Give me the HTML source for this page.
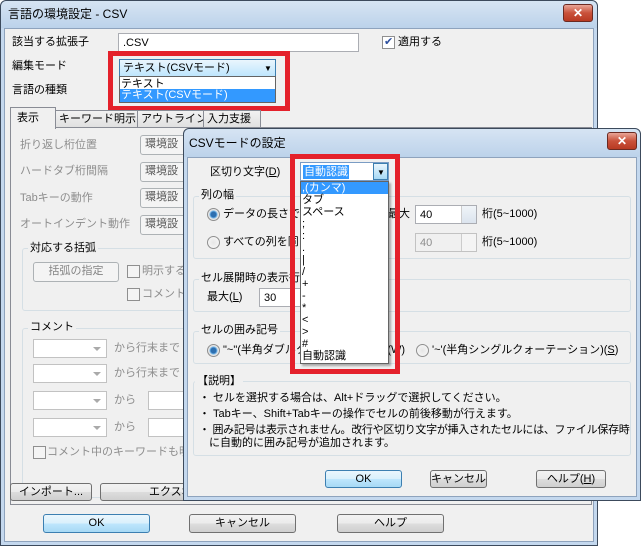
<!DOCTYPE html>
<html><head><meta charset="utf-8">
<style>
*{box-sizing:border-box;margin:0;padding:0}
body{width:642px;height:547px;background:#fff;position:relative;overflow:hidden;font-family:"Liberation Sans","Noto Sans CJK JP",sans-serif;font-size:11px;color:#000}
.a{position:absolute;white-space:nowrap;line-height:14px}
.win{position:absolute;border:1px solid #3c4a5c;border-radius:6px 6px 0 0;background:#c4d8ee;overflow:hidden}
.tb{position:absolute;left:0;right:0;top:0;height:27px;background:linear-gradient(#d6e4f3,#bcd2ea);border-radius:6px 6px 0 0}
.body{position:absolute;background:#f0f0f0;border:1px solid #8ea3bd}
.close{position:absolute;width:30px;height:18px;border:1px solid #6b2a22;border-radius:3px;background:linear-gradient(#e9a597,#c9513a 50%,#b83a22);color:#fff;font-weight:bold;text-align:center;line-height:16px;font-size:12px}
.in{position:absolute;background:#fff;border:1px solid #abadb3}
.btn{position:absolute;white-space:nowrap;overflow:hidden;border:1px solid #707070;border-radius:3px;background:linear-gradient(#f2f2f2,#ebebeb 50%,#dddddd 51%,#cfcfcf);text-align:center;line-height:16px}
.btn.def{border-color:#3c7fb1;background:linear-gradient(#eaf6fd,#d9f0fc 50%,#bee6fd 51%,#a7d9f5)}
.btn.dis{border-color:#adb2b5;background:#f4f4f4;color:#838383}
.g{color:#8d8d8d}
.grp{position:absolute;border:1px solid #d5dfe5;border-radius:3px}
.lbl{position:absolute;background:#f0f0f0;padding:0 2px;line-height:14px;white-space:nowrap}
.cb{position:absolute;width:13px;height:13px;border:1px solid #8f8f8f;background:#f4f4f4}
.rd{position:absolute;width:13px;height:13px;border:1px solid #8f8f8f;border-radius:50%;background:radial-gradient(circle,#e6e6e6,#fafafa)}
.rd.on{background:radial-gradient(circle,#2d6fb0 0 2.5px,#6fb3e8 3.5px,#e6e6e6 4.5px)}
.red{position:absolute;border:5px solid #e4212b}
.dd{position:absolute;background:#fff;border:1px solid #646464;box-shadow:2px 2px 2px rgba(0,0,0,.3)}
.cmb{position:absolute;border:1px solid #c2c2c2;background:#fff}
.cmb:after{content:"";position:absolute;right:5px;top:7px;border:4px solid transparent;border-top:4px solid #aaa}
.spin{position:absolute;width:15px;border-left:1px solid #ccc;right:0;top:0;bottom:0;background:linear-gradient(#f0f4f8,#dbe4ee)}
.tab{position:absolute;white-space:nowrap;overflow:hidden;height:18px;border:1px solid #898c95;background:linear-gradient(#f2f2f2,#e0e0e0);padding:1px 3px;line-height:14px}
</style></head><body>

<!-- main window -->
<div class="win" style="left:0;top:0;width:598px;height:546px">
 <div class="tb"></div>
 <div class="a" style="left:7px;top:6px;font-size:12px">言語の環境設定 - CSV</div>
 <div class="close" style="left:562px;top:3px">✕</div>
 <div class="body" style="left:3px;top:27px;width:590px;height:514px"></div>
</div>
<div class="a" style="left:12px;top:35px">該当する拡張子</div>
<div class="in" style="left:118px;top:33px;width:241px;height:19px"><span class="a" style="left:4px;top:2px">.CSV</span></div>
<div class="cb" style="left:382px;top:36px;background:#fff"><span class="a" style="left:1px;top:-2px;color:#2c4f9e;font-size:11px">✔</span></div>
<div class="a" style="left:398px;top:35px">適用する</div>
<div class="a" style="left:12px;top:59px">編集モード</div>
<div class="a" style="left:12px;top:83px">言語の種類</div>
<div class="in" style="left:119px;top:59px;width:157px;height:18px;border-color:#3c7fb1;background:linear-gradient(#eaf6fd,#bee6fd)"><span class="a" style="left:3px;top:1px">テキスト(CSVモード)</span><span class="a" style="left:144px;top:2px;font-size:8px">▼</span></div>
<div class="dd" style="left:119px;top:76px;width:157px;height:27px;box-shadow:none">
 <div class="a" style="left:1px;top:0">テキスト</div>
 <div class="a" style="left:0;top:12px;width:155px;height:13px;background:#3399ff;color:#fff;line-height:13px;padding-left:1px">テキスト(CSVモード)</div>
</div>
<div class="red" style="left:108px;top:51px;width:182px;height:60px"></div>
<div style="position:absolute;left:194px;top:110px;width:4px;height:12px;background:#e4212b"></div>
<div style="position:absolute;left:190px;top:120px;border:6px solid transparent;border-top:8px solid #e4212b"></div>

<!-- tabs -->
<div style="position:absolute;left:10px;top:127px;width:582px;height:378px;border:1px solid #898c95;background:#fff"></div>
<div style="position:absolute;left:11px;top:128px;width:580px;height:376px;background:#f0f0f0"></div>
<div class="tab" style="left:55px;top:110px;width:83px">キーワード明示</div>
<div class="tab" style="left:137px;top:110px;width:67px">アウトライン</div>
<div class="tab" style="left:203px;top:110px;width:58px">入力支援</div>
<div class="a" style="left:10px;top:107px;width:46px;height:22px;border:1px solid #898c95;border-bottom:none;background:#f0f0f0;padding:3px 6px">表示</div>

<div class="a g" style="left:20px;top:138px">折り返し桁位置</div>
<div class="a g" style="left:20px;top:164px">ハードタブ桁間隔</div>
<div class="a g" style="left:20px;top:191px">Tabキーの動作</div>
<div class="a g" style="left:20px;top:217px">オートインデント動作</div>
<div class="btn dis" style="left:140px;top:135px;width:50px;height:20px;text-align:left;padding-left:4px;color:#555">環境設</div>
<div class="btn dis" style="left:140px;top:162px;width:50px;height:20px;text-align:left;padding-left:4px;color:#555">環境設</div>
<div class="btn dis" style="left:140px;top:188px;width:50px;height:20px;text-align:left;padding-left:4px;color:#555">環境設</div>
<div class="btn dis" style="left:140px;top:215px;width:50px;height:20px;text-align:left;padding-left:4px;color:#555">環境設</div>

<div class="grp" style="left:22px;top:248px;width:170px;height:63px"></div>
<div class="lbl" style="left:28px;top:241px">対応する括弧</div>
<div class="btn dis" style="left:33px;top:262px;width:86px;height:20px">括弧の指定</div>
<div class="cb" style="left:127px;top:265px"></div><div class="a g" style="left:142px;top:264px">明示する</div>
<div class="cb" style="left:127px;top:288px"></div><div class="a g" style="left:142px;top:287px">コメント/</div>

<div class="grp" style="left:22px;top:328px;width:170px;height:170px"></div>
<div class="lbl" style="left:28px;top:320px">コメント</div>
<div class="cmb" style="left:33px;top:339px;width:74px;height:19px"></div><div class="a g" style="left:114px;top:341px">から行末まで</div>
<div class="cmb" style="left:33px;top:364px;width:74px;height:19px"></div><div class="a g" style="left:114px;top:366px">から行末まで</div>
<div class="cmb" style="left:33px;top:391px;width:74px;height:19px"></div><div class="a g" style="left:114px;top:393px">から</div>
<div class="in" style="left:148px;top:391px;width:40px;height:19px;border-color:#c2c2c2"></div>
<div class="cmb" style="left:33px;top:418px;width:74px;height:19px"></div><div class="a g" style="left:114px;top:420px">から</div>
<div class="in" style="left:148px;top:418px;width:40px;height:19px;border-color:#c2c2c2"></div>
<div class="cb" style="left:33px;top:446px"></div><div class="a g" style="left:47px;top:445px">コメント中のキーワードも明示</div>

<div class="btn" style="left:10px;top:483px;width:82px;height:18px">インポート...</div>
<div class="btn" style="left:100px;top:483px;width:90px;height:18px;text-align:left;padding-left:48px">エクスポ</div>
<div class="btn def" style="left:43px;top:514px;width:107px;height:19px">OK</div>
<div class="btn" style="left:189px;top:514px;width:107px;height:19px">キャンセル</div>
<div class="btn" style="left:337px;top:514px;width:107px;height:19px">ヘルプ</div>

<!-- sub dialog -->
<div class="win" style="left:183px;top:128px;width:458px;height:373px">
 <div class="tb" style="height:28px"></div>
 <div class="a" style="left:5px;top:7px;font-size:12px">CSVモードの設定</div>
 <div class="close" style="left:423px;top:3px">✕</div>
 <div class="body" style="left:3px;top:28px;width:450px;height:340px"></div>
</div>
<div class="a" style="left:210px;top:165px">区切り文字(<u>D</u>)</div>
<div class="in" style="left:300px;top:162px;width:89px;height:19px;border-color:#7a9cc4">
 <span class="a" style="left:2px;top:2px;background:#3399ff;color:#fff;padding:0 1px">自動認識</span>
 <div style="position:absolute;right:0;top:0;width:15px;height:17px;border:1px solid #3c7fb1;background:linear-gradient(#eaf6fd,#a7d9f5)"><span class="a" style="left:3px;top:2px;font-size:8px">▼</span></div>
</div>

<div class="grp" style="left:193px;top:196px;width:438px;height:63px"></div>
<div class="lbl" style="left:199px;top:188px">列の幅</div>
<div class="rd on" style="left:207px;top:208px"></div><div class="a" style="left:223px;top:207px">データの長さで自</div>
<div class="a" style="left:388px;top:207px">最大</div>
<div class="in" style="left:415px;top:205px;width:62px;height:19px"><span class="a" style="left:4px;top:2px">40</span><div class="spin"></div></div>
<div class="a" style="left:482px;top:207px">桁(5~1000)</div>
<div class="rd" style="left:207px;top:236px"></div><div class="a" style="left:223px;top:235px">すべての列を同じ</div>
<div class="in" style="left:415px;top:233px;width:62px;height:19px;background:#f0f0f0;border-color:#c2c2c2"><span class="a g" style="left:4px;top:2px">40</span><div class="spin" style="background:#f4f4f4"></div></div>
<div class="a" style="left:482px;top:235px">桁(5~1000)</div>

<div class="grp" style="left:193px;top:279px;width:438px;height:33px"></div>
<div class="lbl" style="left:199px;top:271px">セル展開時の表示行</div>
<div class="a" style="left:207px;top:290px">最大(<u>L</u>)</div>
<div class="in" style="left:259px;top:288px;width:45px;height:19px"><span class="a" style="left:4px;top:2px">30</span></div>

<div class="grp" style="left:193px;top:331px;width:438px;height:33px"></div>
<div class="lbl" style="left:199px;top:323px">セルの囲み記号</div>
<div class="rd on" style="left:207px;top:344px"></div><div class="a" style="left:223px;top:343px">"~"(半角ダブルクォーテーション)(W)</div>
<div class="rd" style="left:416px;top:344px"></div><div class="a" style="left:432px;top:343px">'~'(半角シングルクォーテーション)(<u>S</u>)</div>

<div class="grp" style="left:193px;top:381px;width:438px;height:75px"></div>
<div class="lbl" style="left:195px;top:374px">【説明】</div>
<div class="a" style="left:199px;top:391px">・ セルを選択する場合は、Alt+ドラッグで選択してください。</div>
<div class="a" style="left:199px;top:407px">・ Tabキー、Shift+Tabキーの操作でセルの前後移動が行えます。</div>
<div class="a" style="left:199px;top:423px;letter-spacing:-0.3px">・ 囲み記号は表示されません。改行や区切り文字が挿入されたセルには、ファイル保存時</div>
<div class="a" style="left:209px;top:436px">に自動的に囲み記号が追加されます。</div>

<div class="btn def" style="left:325px;top:470px;width:77px;height:18px">OK</div>
<div class="btn" style="left:430px;top:470px;width:57px;height:18px">キャンセル</div>
<div class="btn" style="left:536px;top:470px;width:70px;height:18px">ヘルプ(<u>H</u>)</div>

<!-- delimiter dropdown -->
<div class="dd" style="left:300px;top:181px;width:89px;height:183px">
 <div class="a" style="left:0;top:0;width:87px;height:12px;line-height:12px;background:#3399ff;color:#fff;padding-left:1px">,(カンマ)</div>
 <div class="a" style="left:1px;top:12px;line-height:12px">タブ</div>
 <div class="a" style="left:1px;top:24px;line-height:12px">スペース</div>
 <div class="a" style="left:1px;top:36px;line-height:12px">;</div>
 <div class="a" style="left:1px;top:48px;line-height:12px">:</div>
 <div class="a" style="left:1px;top:60px;line-height:12px">.</div>
 <div class="a" style="left:1px;top:72px;line-height:12px">|</div>
 <div class="a" style="left:1px;top:84px;line-height:12px">/</div>
 <div class="a" style="left:1px;top:96px;line-height:12px">+</div>
 <div class="a" style="left:1px;top:108px;line-height:12px">-</div>
 <div class="a" style="left:1px;top:120px;line-height:12px">*</div>
 <div class="a" style="left:1px;top:132px;line-height:12px">&lt;</div>
 <div class="a" style="left:1px;top:144px;line-height:12px">&gt;</div>
 <div class="a" style="left:1px;top:156px;line-height:12px">#</div>
 <div class="a" style="left:1px;top:168px;line-height:13px">自動認識</div>
</div>
<div class="red" style="left:290px;top:154px;width:110px;height:220px"></div>
</body></html>
